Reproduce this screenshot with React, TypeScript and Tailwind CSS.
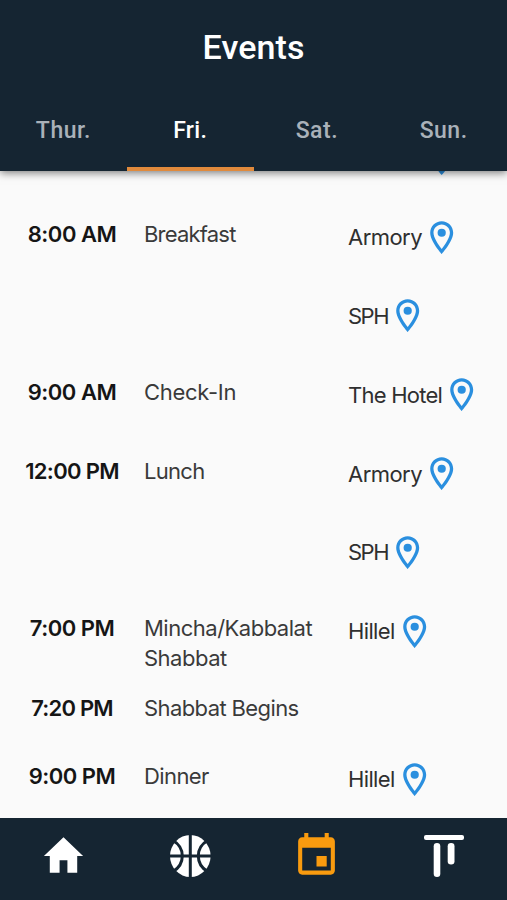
import clsx from 'clsx';

const days = [
  { label: 'Thur.', tracking: 'tracking-[0.5px]' },
  { label: 'Fri.', tracking: 'tracking-[0.3px]', active: true },
  { label: 'Sat.', tracking: 'tracking-[0.5px]' },
  { label: 'Sun.', tracking: 'tracking-[0.5px]' },
];

const armory = { name: 'Armory', tracking: 'tracking-[-0.55px]' };
const sph = { name: 'SPH', tracking: 'tracking-[-1.5px]' };
const hotel = { name: 'The Hotel', tracking: 'tracking-[-0.75px]' };
const hillel = { name: 'Hillel', tracking: 'tracking-[-0.65px]' };

const events = [
  {
    time: '8:00 AM',
    title: 'Breakfast',
    places: [armory, sph],
    height: 'h-[157.5px]',
    timeTracking: 'tracking-[-0.5px]',
    titleTracking: 'tracking-[-0.8px]',
  },
  {
    time: '9:00 AM',
    title: 'Check-In',
    places: [hotel],
    height: 'h-[79px]',
    timeTracking: 'tracking-[-0.5px]',
    titleTracking: 'tracking-[-0.3px]',
  },
  {
    time: '12:00 PM',
    title: 'Lunch',
    places: [armory, sph],
    height: 'h-[157.5px]',
    timeTracking: 'tracking-[-0.7px]',
    titleTracking: 'tracking-[-0.7px]',
  },
  {
    time: '7:00 PM',
    title: 'Mincha/Kabbalat Shabbat',
    places: [hillel],
    height: 'h-[80px]',
    timeTracking: 'tracking-[-0.5px]',
    titleTracking: 'tracking-[-0.5px]',
  },
  {
    time: '7:20 PM',
    title: 'Shabbat Begins',
    places: [],
    height: 'h-[68px]',
    timeTracking: 'tracking-[-0.8px]',
    titleTracking: 'tracking-[-0.6px]',
  },
  {
    time: '9:00 PM',
    title: 'Dinner',
    places: [hillel],
    height: 'h-[79px]',
    timeTracking: 'tracking-[-0.5px]',
    titleTracking: 'tracking-[-0.6px]',
  },
];

const PinIcon = () => (
  <svg viewBox="0 0 24 24" className="size-[39.4px] shrink-0 fill-[#2a8fdf]">
    <path d="M12 2C8.13 2 5 5.13 5 9c0 5.25 7 13 7 13s7-7.75 7-13c0-3.87-3.13-7-7-7zM7 9c0-2.76 2.24-5 5-5s5 2.24 5 5c0 2.88-2.88 7.19-5 9.88C9.92 16.21 7 11.85 7 9z" />
    <circle cx="12" cy="9" r="2.5" />
  </svg>
);

const HomeIcon = () => (
  <svg viewBox="0 0 24 24" preserveAspectRatio="none" className="h-[50px] w-[47px] fill-white">
    <path d="M10 20v-6h4v6h5v-8h3L12 3 2 12h3v8z" />
  </svg>
);

const BallIcon = () => (
  <svg viewBox="0 0 50 50" className="size-[50px]">
    <ellipse cx="25.3" cy="25" rx="20.3" ry="21" className="fill-white" />
    <g className="fill-none stroke-[#152532] stroke-[3px]">
      <path d="M25.3 3v44M3 25h44" />
      <path d="M8 9.5C14 13 17.3 18.5 17.3 25S14 37 8 40.5M42.6 9.5C36.6 13 33.3 18.5 33.3 25s3.3 12 9.3 15.5" />
    </g>
  </svg>
);

const CalendarIcon = () => (
  <svg viewBox="0 0 24 24" preserveAspectRatio="none" className="h-[50px] w-[49px] fill-[#f99b0f]">
    <path d="M17 12h-5v5h5v-5zM16 1v2H8V1H6v2H5c-1.11 0-1.99.9-1.99 2L3 19c0 1.1.89 2 2 2h14c1.1 0 2-.9 2-2V5c0-1.1-.9-2-2-2h-1V1h-2zm3 18H5V8h14v11z" />
  </svg>
);

const BracketIcon = () => (
  <svg viewBox="0 0 50 50" className="size-[50px] fill-white">
    <rect x="5" y="4" width="40" height="5" rx="2" />
    <rect x="14.7" y="12" width="6.6" height="34" rx="3.3" />
    <rect x="28.7" y="12" width="6.8" height="21.5" rx="3.3" />
  </svg>
);

const Header = () => (
  <header className="relative z-10 flex h-[171px] flex-col bg-[#152532] font-['Roboto',sans-serif] font-medium shadow-[0_2px_8px_rgba(0,0,0,0.5)]">
    <h1 className="pt-[26px] text-center text-[34px] leading-[42px] tracking-[0.1px] text-white">
      Events
    </h1>
    <nav className="mt-auto grid h-[80px] grid-cols-4">
      {days.map((day) => (
        <a
          key={day.label}
          className={clsx(
            'flex justify-center border-b-4 pt-[25px] text-[23px] leading-[30px]',
            day.tracking,
            day.active ? 'border-[#e08a3c] text-white' : 'border-transparent text-[#a9b1b9]',
          )}
        >
          {day.label}
        </a>
      ))}
    </nav>
  </header>
);

const EventList = () => (
  <main className="h-[647px] overflow-hidden font-['Inter',sans-serif] text-[22px] leading-[29.5px]">
    {/* tail of the event scrolled under the header */}
    <div className="-mt-[52px] flex h-[79px] items-center pl-[421.5px]">
      <PinIcon />
    </div>
    {events.map((event) => (
      <div key={event.time} className={clsx('flex', event.height)}>
        <div
          className={clsx(
            'w-[144px] shrink-0 pt-[22px] text-center font-semibold text-[#151515]',
            event.timeTracking,
          )}
        >
          {event.time}
        </div>
        <div className={clsx('w-[204px] shrink-0 pt-[22px] pr-5 text-[#3a3a3a]', event.titleTracking)}>
          {event.title}
        </div>
        <div className="text-[#2f2f2f]">
          {event.places.map((place) => (
            <div key={place.name} className="flex h-[78.7px] items-center">
              <span className={clsx('pt-px', place.tracking)}>{place.name}</span>
              <PinIcon />
            </div>
          ))}
        </div>
      </div>
    ))}
  </main>
);

const BottomNav = () => (
  <nav className="grid h-[82px] grid-cols-4 justify-items-center bg-[#152532] pt-[13px]">
    <HomeIcon />
    <BallIcon />
    <CalendarIcon />
    <BracketIcon />
  </nav>
);

export default function App() {
  return (
    <div className="h-[900px] w-[507px] overflow-hidden bg-[#fafafa]">
      <Header />
      <EventList />
      <BottomNav />
    </div>
  );
}
